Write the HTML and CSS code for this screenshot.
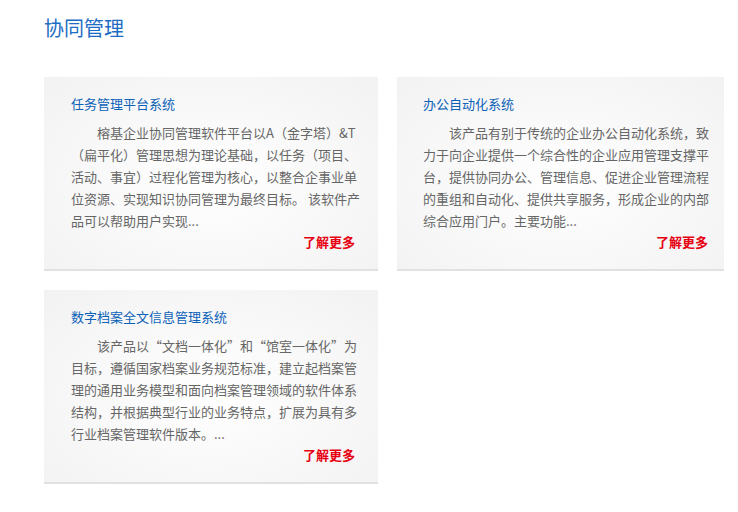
FILE: index.html
```html
<!DOCTYPE html>
<html lang="zh-CN">
<head>
<meta charset="utf-8">
<title>协同管理</title>
<link rel="stylesheet" href="styles.css">
</head>
<body>
<div class="page">
  <h1 class="heading">协同管理</h1>
  <div class="cards">
    <div class="card card-wide">
      <h2 class="card-title">任务管理平台系统</h2>
      <p class="card-text">榕基企业协同管理软件平台以A（金字塔）&amp;T（扁平化）管理思想为理论基础，以任务（项目、活动、事宜）过程化管理为核心，以整合企事业单位资源、实现知识协同管理为最终目标。 该软件产品可以帮助用户实现...</p>
      <div class="card-more"><a href="#" class="more-link">了解更多</a></div>
    </div>
    <div class="card card-narrow">
      <h2 class="card-title">办公自动化系统</h2>
      <p class="card-text">该产品有别于传统的企业办公自动化系统，致力于向企业提供一个综合性的企业应用管理支撑平台，提供协同办公、管理信息、促进企业管理流程的重组和自动化、提供共享服务，形成企业的内部综合应用门户。主要功能...</p>
      <div class="card-more"><a href="#" class="more-link">了解更多</a></div>
    </div>
    <div class="card card-wide">
      <h2 class="card-title">数字档案全文信息管理系统</h2>
      <p class="card-text">该产品以“文档一体化”和“馆室一体化”为目标，遵循国家档案业务规范标准，建立起档案管理的通用业务模型和面向档案管理领域的软件体系结构，并根据典型行业的业务特点，扩展为具有多行业档案管理软件版本。...</p>
      <div class="card-more"><a href="#" class="more-link">了解更多</a></div>
    </div>
  </div>
</div>
</body>
</html>
```

FILE: styles.css
```css
html, body {
  margin: 0;
  padding: 0;
  background: #ffffff;
}

body {
  font-family: "Noto Sans CJK SC", "Noto Sans", sans-serif;
}

.page {
  padding: 14px 0 0 44px;
}

.heading {
  margin: 0 0 35px 0;
  font-size: 20px;
  line-height: 28px;
  font-weight: normal;
  color: #1e6cc4;
}

.cards {
  display: grid;
  grid-template-columns: 334px 327px;
  column-gap: 19px;
  row-gap: 19px;
  align-items: start;
}

.card {
  box-sizing: border-box;
  height: 194px;
  padding: 17px 0 0 27px;
  background: radial-gradient(ellipse at 50% 55%, #ffffff 0%, #f9f9f9 45%, #f2f2f2 100%);
  border-bottom: 2px solid #e1e1e1;
}

.card-wide {
  padding-right: 15px;
}

.card-narrow {
  padding-left: 26px;
  padding-right: 12px;
}

.card-title {
  margin: 0 0 8px 0;
  font-size: 13px;
  line-height: 20px;
  font-weight: normal;
  color: #0c62b8;
}

.card-text {
  margin: 0;
  font-size: 13px;
  line-height: 22px;
  color: #666666;
  text-indent: 26px;
}

.card-more {
  text-align: right;
  padding-right: 8px;
  font-size: 13px;
  line-height: 20px;
}

.card-narrow .card-more {
  padding-right: 4px;
}

.more-link {
  color: #e60012;
  text-decoration: none;
  font-weight: bold;
}
```
